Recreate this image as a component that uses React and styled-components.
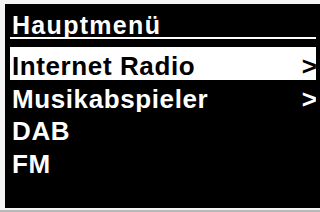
import React from "react";
import styled, { createGlobalStyle } from "styled-components";

const Global = createGlobalStyle`
  html, body { margin: 0; padding: 0; background: #ffffff; }
  body { width: 320px; height: 212px; overflow: hidden; }
`;

const Frame = styled.div`
  width: 320px;
  height: 212px;
  background: #f4f4f4;
  box-sizing: border-box;
  padding: 4px 0 4px 5px;
  border-bottom: 2px solid #b8b8b8;
`;

const Screen = styled.div`
  width: 315px;
  height: 204px;
  background: #000;
  box-sizing: border-box;
  padding: 0 4px 0 5px;
  display: flex;
  flex-direction: column;
  font-family: "Liberation Sans", Arial, Helvetica, sans-serif;
  font-weight: bold;
  overflow: hidden;
`;

const Title = styled.div`
  height: 24px;
  padding: 9px 0 0 2px;
  font-size: 25px;
  line-height: 24px;
  letter-spacing: 1.3px;
  color: #fff;
  border-bottom: 2px solid #fff;
  margin-bottom: 8px;
`;

const Row = styled.div`
  height: 32.6px;
  flex: none;
  box-sizing: border-box;
  padding: 4px 0 0 2px;
  display: flex;
  justify-content: space-between;
  font-size: 26px;
  line-height: 30px;
  letter-spacing: 0.6px;
  overflow: hidden;
  background: ${(p) => (p.$active ? "#fff" : "transparent")};
  color: ${(p) => (p.$active ? "#000" : "#fff")};
`;

const Chevron = styled.span`
  margin-right: -1px;
  letter-spacing: 0;
`;

const items = [
  { label: "Internet Radio", more: true, active: true },
  { label: "Musikabspieler", more: true },
  { label: "DAB" },
  { label: "FM" },
];

export default function App() {
  return (
    <>
      <Global />
      <Frame>
        <Screen>
          <Title>Hauptmenü</Title>
          {items.map((it) => (
            <Row key={it.label} $active={it.active}>
              <span>{it.label}</span>
              {it.more && <Chevron>&gt;</Chevron>}
            </Row>
          ))}
        </Screen>
      </Frame>
    </>
  );
}
